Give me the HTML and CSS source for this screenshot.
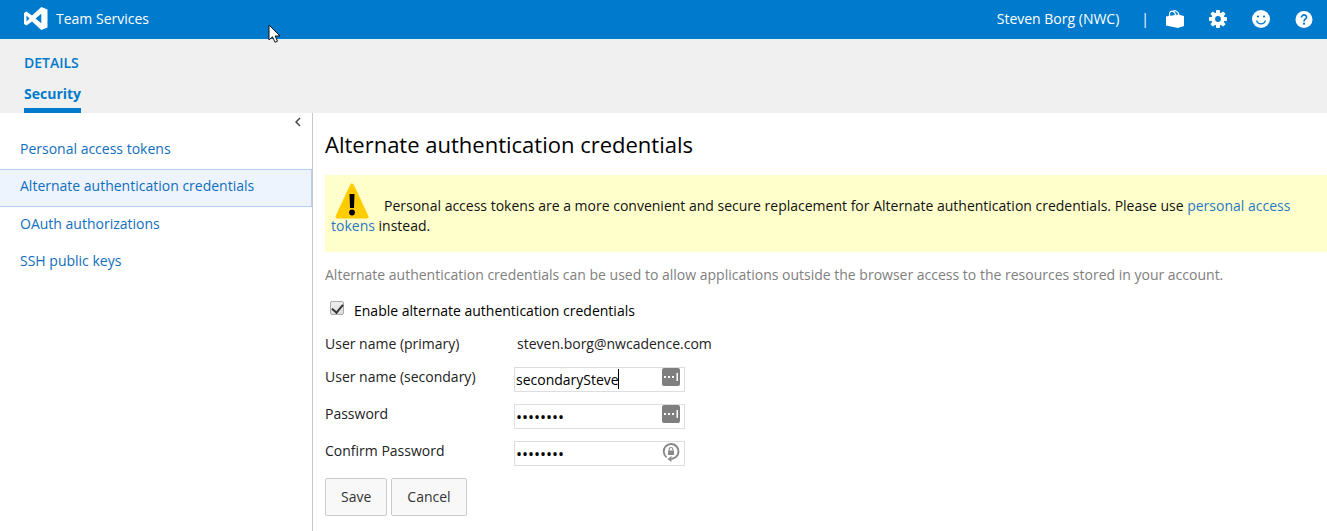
FILE: index.html
```html
<!DOCTYPE html>
<html lang="en">
<head>
<meta charset="utf-8">
<title>Security - Team Services</title>
<link rel="stylesheet" href="styles.css">
</head>
<body>
<header class="topbar">
  <a class="brand" href="#">
    <svg class="brand-logo" width="24" height="24" viewBox="0 0 24 24" aria-hidden="true"><path fill="#fff" fill-rule="evenodd" d="M17.300 0L23.500 2.400V20.600L17.300 23L8 14.400L2.500 18.400L0 17V6L2.500 4.600L8 8.600ZM17.300 6.800L11.500 11.500L17.300 16.200ZM2.500 8.500V14.500L5.500 11.500Z"/></svg>
    <span>Team Services</span>
  </a>
  <nav class="tools" aria-label="Account">
    <a class="user" href="#">Steven Borg (NWC)</a>
    <span class="divider">|</span>
    <button class="tool" type="button" aria-label="Marketplace"><svg width="18" height="18" viewBox="0 0 18 18"><path fill="#fff" d="M0 6.500L12 4.500L18 6V16L12 18L0 15.500Z"/><path fill="none" stroke="#fff" stroke-width="1.200" d="M3.500 6.500V4.500C3.500 0 8.500 0 9.500 5M6.500 2C8-.300 12 .500 13 5"/></svg></button>
    <button class="tool" type="button" aria-label="Settings"><svg width="18" height="18" viewBox="0 0 18 18"><g fill="#fff"><path id="tooth" d="M7.300 0H10.700L11.300 4H6.700ZM6.700 14H11.300L10.700 18H7.300Z"/><use href="#tooth" transform="rotate(45 9 9)"/><use href="#tooth" transform="rotate(90 9 9)"/><use href="#tooth" transform="rotate(135 9 9)"/></g><circle cx="9" cy="9" r="4.700" fill="none" stroke="#fff" stroke-width="3.600"/></svg></button>
    <button class="tool" type="button" aria-label="Feedback"><svg width="18" height="18" viewBox="0 0 18 18"><circle cx="9" cy="9" r="9" fill="#fff"/><circle cx="6" cy="6.500" r="1.100" fill="#007acc"/><circle cx="12" cy="6.500" r="1.100" fill="#007acc"/><path d="M4.500 10.500C6 15 12 15 13.500 10.500" fill="none" stroke="#007acc" stroke-width="1.200"/></svg></button>
    <button class="tool" type="button" aria-label="Help"><svg width="18" height="18" viewBox="0 0 18 18"><circle cx="9" cy="9.500" r="8.500" fill="#fff"/><path d="M6.500 7.500C6.500 4 11.800 4.200 11.500 7.400C11.300 9 9 9 9 11.500" fill="none" stroke="#007acc" stroke-width="1.700"/><circle cx="9" cy="13.700" r="1.100" fill="#007acc"/></svg></button>
  </nav>
  <svg class="pointer" width="14" height="20" viewBox="0 0 14 20" aria-hidden="true"><path d="M1 1V16L4.500 12.800L7 18.300L9.500 17.200L7.200 12H12Z" fill="#fff" stroke="#111" stroke-width="1"/></svg>
</header>
<div class="subhead">
  <a class="hub" href="#">DETAILS</a>
  <a class="tab" href="#" aria-current="page">Security</a>
</div>
<div class="layout">
  <aside class="sidebar">
    <button class="collapse" type="button" aria-label="Collapse"><svg width="6" height="10" viewBox="0 0 6 10"><path d="M5 1L1 5L5 9" fill="none" stroke="#444" stroke-width="1.500"/></svg></button>
    <nav class="menu" aria-label="Security">
      <a class="item" href="#">Personal access tokens</a>
      <a class="item selected" href="#">Alternate authentication credentials</a>
      <a class="item" href="#">OAuth authorizations</a>
      <a class="item" href="#">SSH public keys</a>
    </nav>
  </aside>
  <main class="content">
    <h1 class="title">Alternate authentication credentials</h1>
    <p class="notice"><svg class="warning" width="36" height="36" viewBox="0 0 36 36" aria-hidden="true"><path d="M18 2.500L32.500 33.500H3.500Z" fill="#fc0" stroke="#fc0" stroke-width="4" stroke-linejoin="round"/><path d="M15.500 11H20.500L20 25H16Z"/><circle cx="18" cy="29.500" r="2.900"/></svg>Personal access tokens are a more convenient and secure replacement for Alternate authentication credentials. Please use <a class="link" href="#">personal access tokens</a> instead.</p>
    <p class="description">Alternate authentication credentials can be used to allow applications outside the browser access to the resources stored in your account.</p>
    <form class="form">
      <div class="enable"><input class="check" id="enable" type="checkbox" checked><label for="enable">Enable alternate authentication credentials</label></div>
      <div class="row"><span>User name (primary)</span><span class="value">steven.borg@nwcadence.com</span></div>
      <div class="row"><label for="secondary">User name (secondary)</label>
        <span class="field"><input class="input" id="secondary" type="text" value="secondarySteve"><span class="caret"></span><svg class="badge" width="18" height="18" viewBox="0 0 18 18"><rect width="18" height="18" rx="2" fill="#7f7f7f"/><path d="M2 8H4V10H2ZM6 8H8V10H6ZM10 8H12V10H10ZM14.500 5H16V13H14.500Z" fill="#fff"/></svg></span></div>
      <div class="row secret"><label for="password">Password</label>
        <span class="field"><input class="input" id="password" type="password" value="password"><svg class="badge" width="18" height="18" viewBox="0 0 18 18"><rect width="18" height="18" rx="2" fill="#7f7f7f"/><path d="M2 8H4V10H2ZM6 8H8V10H6ZM10 8H12V10H10ZM14.500 5H16V13H14.500Z" fill="#fff"/></svg></span></div>
      <div class="row secret"><label for="confirm">Confirm Password</label>
        <span class="field"><input class="input" id="confirm" type="password" value="password"><svg class="badge" width="18" height="20" viewBox="0 0 18 20"><path d="M4.500 15.200A7.400 7.400 0 1 1 14 15L9.500 17.200" fill="none" stroke="#888" stroke-width="1.900"/><path d="M5.500 17L9.500 14V20Z" fill="#888"/><rect x="6" y="8.500" width="6" height="4.500" fill="#888"/><path d="M7.200 8.500V7C7.200 5 10.800 5 10.800 7V8.500" fill="none" stroke="#888" stroke-width="1.100"/></svg></span></div>
      <div class="actions"><button class="button" type="button">Save</button><button class="button" type="button">Cancel</button></div>
    </form>
  </main>
</div>
</body>
</html>
```
FILE: styles.css
```css
* { box-sizing: border-box; }
body {
  margin: 0;
  min-height: 100vh;
  display: flex;
  flex-direction: column;
  font: 14px/20px "Open Sans", "Noto Sans", sans-serif;
  color: #222;
  background: #fff;
}
a { color: #106ebe; text-decoration: none; }
button, input { font: inherit; color: inherit; }
.topbar {
  position: relative;
  display: flex;
  justify-content: space-between;
  align-items: center;
  height: 39px;
  padding: 0 14px 2px 24px;
  background: #007acc;
}
.brand { display: flex; align-items: center; gap: 8px; color: #fff; }
.tools { display: flex; align-items: center; color: #fff; }
.user { color: #fff; }
.divider { margin: 0 17px 0 22px; }
.tool { display: flex; padding: 0; border: 0; background: none; }
.tool + .tool { margin-left: 25px; }
.pointer { position: absolute; left: 268px; top: 24px; }
.subhead {
  display: flex;
  flex-direction: column;
  align-items: flex-start;
  gap: 11px;
  padding: 14px 24px 0;
  background: #f0f0f0;
  font-weight: 600;
}
.hub, .tab { color: #007acc; }
.tab { padding-bottom: 4px; border-bottom: 5px solid #007acc; font-weight: 700; }
.layout { flex: 1; display: flex; }
.sidebar { flex: 0 0 313px; border-right: 1px solid #c8c8c8; }
.collapse {
  display: flex;
  margin: 0 10px 0 auto;
  padding: 4px 1px 5px;
  border: 0;
  background: none;
}
.menu { display: flex; flex-direction: column; }
.item { padding: 7px 19px 10px 20px; border: 0 solid #b5cff5; }
.item.selected { padding-top: 6px; border-width: 1px 1px 1px 0; background: #edf4fe; }
.content { flex: 1; min-width: 0; padding: 15px 0 15px 12px; }
.title { margin: 0; font-size: 22px; line-height: 32px; font-weight: 400; color: #000; }
.notice {
  margin: 15px 0 0;
  padding: 8px 6px 16px;
  background: #ffffcc;
  color: #111;
}
.warning { display: inline-block; margin: 0 14px -8px 3px; vertical-align: baseline; }
.link { color: #2a78c4; }
.description { margin: 13px 0 0; color: #808080; }
.form { margin: 16px 0 0; }
.enable { display: flex; gap: 10px; color: #000; }
.check {
  appearance: none;
  width: 14px;
  height: 14px;
  margin: 0 0 0 5px;
  border: 1px solid #aaa;
  border-radius: 2px;
  background: linear-gradient(#eee, #ddd);
}
.check:checked::before {
  content: "";
  display: block;
  width: 5px;
  height: 9px;
  margin: 0 auto;
  border: solid #333;
  border-width: 0 2px 2px 0;
  transform: rotate(40deg);
}
.row { display: grid; grid-template-columns: 189px 171px; align-items: start; margin-top: 13px; }
.row.secret { margin-top: 12px; }
.value { padding-left: 3px; }
.field { position: relative; display: flex; }
.input {
  width: 100%;
  height: 25px;
  padding: 0 1px;
  border: 1px solid #ddd;
  background: #fff;
  color: #000;
  outline: 0;
}
.secret .input { font-size: 16px; }
.badge { position: absolute; right: 5px; top: 1px; }
.caret { position: absolute; left: 104px; top: 2px; width: 1px; height: 20px; background: #000; }
.actions { display: flex; gap: 4px; margin-top: 12px; }
.button {
  height: 38px;
  padding: 0 15px;
  border: 1px solid #ccc;
  border-radius: 2px;
  background: #f8f8f8;
  color: #333;
}
```
